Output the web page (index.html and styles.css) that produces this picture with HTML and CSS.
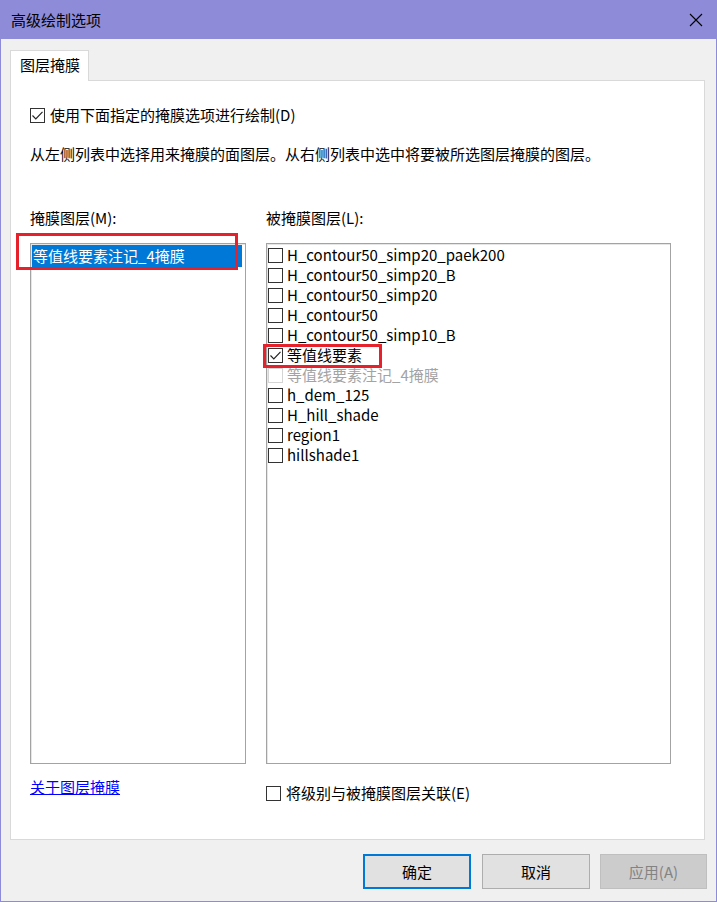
FILE: index.html
```html
<!DOCTYPE html>
<html lang="zh-CN">
<head>
<meta charset="utf-8">
<title>高级绘制选项</title>
<link rel="stylesheet" href="styles.css">
</head>
<body>
<div class="window">
  <div class="titlebar">
    <span class="title">高级绘制选项</span>
    <span class="close"><svg width="14" height="14" viewBox="0 0 14 14"><path d="M1 1L13 13M13 1L1 13" stroke="#000" stroke-width="1.1" fill="none"/></svg></span>
  </div>
  <div class="content">
    <div class="tabs"><div class="tab">图层掩膜</div></div>
    <div class="panel">
      <div class="check-row opt-d">
        <span class="cb"><svg width="13" height="13" viewBox="0 0 13 13"><path d="M1.5 6.5L4.8 9.8L11.5 2.8" stroke="#222" stroke-width="1.2" fill="none"/></svg></span>
        <span class="cb-label">使用下面指定的掩膜选项进行绘制(D)</span>
      </div>
      <p class="desc">从左侧列表中选择用来掩膜的面图层。从右侧列表中选中将要被所选图层掩膜的图层。</p>
      <div class="columns">
        <div class="col col-left">
          <div class="lbl">掩膜图层(M):</div>
          <div class="list">
            <div class="sel-item">等值线要素注记_4掩膜</div>
            <div class="mark mark-left"></div>
          </div>
          <a class="link" href="#">关于图层掩膜</a>
        </div>
        <div class="col col-right">
          <div class="lbl">被掩膜图层(L):</div>
          <div class="list list-checks">
            <div class="item"><span class="cb"></span><span>H_contour50_simp20_paek200</span></div>
            <div class="item"><span class="cb"></span><span>H_contour50_simp20_B</span></div>
            <div class="item"><span class="cb"></span><span>H_contour50_simp20</span></div>
            <div class="item"><span class="cb"></span><span>H_contour50</span></div>
            <div class="item"><span class="cb"></span><span>H_contour50_simp10_B</span></div>
            <div class="item"><span class="cb"><svg width="13" height="13" viewBox="0 0 13 13"><path d="M1.5 6.5L4.8 9.8L11.5 2.8" stroke="#222" stroke-width="1.2" fill="none"/></svg></span><span>等值线要素</span></div>
            <div class="item disabled"><span class="cb"></span><span>等值线要素注记_4掩膜</span></div>
            <div class="item"><span class="cb"></span><span>h_dem_125</span></div>
            <div class="item"><span class="cb"></span><span>H_hill_shade</span></div>
            <div class="item"><span class="cb"></span><span>region1</span></div>
            <div class="item"><span class="cb"></span><span>hillshade1</span></div>
            <div class="mark mark-right"></div>
          </div>
          <div class="check-row opt-e">
            <span class="cb"></span>
            <span class="cb-label">将级别与被掩膜图层关联(E)</span>
          </div>
        </div>
      </div>
    </div>
    <div class="buttons">
      <div class="btn btn-default">确定</div>
      <div class="btn btn-cancel">取消</div>
      <div class="btn btn-disabled">应用(A)</div>
    </div>
  </div>
</div>
</body>
</html>
```

FILE: styles.css
```css
html, body {
  margin: 0;
  padding: 0;
}
body {
  width: 717px;
  height: 902px;
  overflow: hidden;
  background: #f0f0f0;
  font-family: "Noto Sans CJK SC", "Noto Sans", sans-serif;
  font-size: 15px;
  color: #000;
}
.window {
  box-sizing: border-box;
  width: 717px;
  height: 902px;
  border: 1px solid #8e8bd9;
  border-top: none;
  background: #f0f0f0;
  display: flex;
  flex-direction: column;
}
.titlebar {
  height: 39px;
  background: #8e8bd9;
  display: flex;
  align-items: center;
  justify-content: space-between;
  padding: 0 13px 0 10px;
}
.title {
  line-height: 20px;
}
.close {
  display: flex;
  width: 14px;
  height: 14px;
}
.content {
  padding: 11px 9px 0 9px;
  display: flex;
  flex-direction: column;
}
.tabs {
  display: flex;
}
.tab {
  box-sizing: border-box;
  width: 79px;
  height: 31px;
  border: 1px solid #d9d9d9;
  border-bottom: none;
  background: #fff;
  margin-bottom: -1px;
  position: relative;
  z-index: 1;
  padding-left: 9px;
  line-height: 28px;
}
.panel {
  box-sizing: border-box;
  height: 760px;
  margin-right: 2px;
  border: 1px solid #d9d9d9;
  background: #fff;
  padding-left: 19px;
}
.check-row {
  display: flex;
  align-items: center;
  height: 20px;
  line-height: 20px;
}
.cb {
  box-sizing: border-box;
  width: 15px;
  height: 15px;
  border: 1px solid #333;
  background: #fff;
  display: flex;
  align-items: center;
  justify-content: center;
  flex: none;
}
.cb-label {
  margin-left: 5px;
}
.opt-d {
  margin-top: 24px;
}
.desc {
  margin: 19px 0 0;
  line-height: 20px;
}
.columns {
  margin-top: 44px;
  display: flex;
  gap: 20px;
}
.col {
  display: flex;
  flex-direction: column;
}
.col-left {
  width: 216px;
}
.col-right {
  width: 405px;
}
.lbl {
  line-height: 20px;
}
.list {
  box-sizing: border-box;
  position: relative;
  margin-top: 15px;
  height: 521px;
  border: 1px solid #a3a3a3;
  background: #fff;
  box-shadow: inset 1px 1px 0 #e6e6e6;
}
.sel-item {
  margin: 1px 3px 0 1px;
  height: 22px;
  line-height: 22px;
  padding-left: 1px;
  background: #0078d7;
  color: #fff;
}
.list-checks {
  padding: 1px;
}
.item {
  display: flex;
  align-items: center;
  height: 20px;
  line-height: 20px;
  gap: 4px;
}
.item.disabled {
  color: #a3a3a3;
}
.item.disabled .cb {
  border-color: #d4d4d4;
}
.mark {
  position: absolute;
  box-sizing: border-box;
  border: 3px solid #e5212b;
}
.mark-left {
  left: -15px;
  top: -11px;
  width: 222px;
  height: 37px;
}
.mark-right {
  left: -4px;
  top: 100px;
  width: 119px;
  height: 24px;
}
.link {
  margin-top: 13px;
  line-height: 20px;
  color: #0000ff;
  text-decoration: underline;
  align-self: flex-start;
}
.opt-e {
  margin-top: 19px;
}
.buttons {
  margin-top: 14px;
  display: flex;
  justify-content: flex-end;
}
.btn {
  box-sizing: border-box;
  width: 108px;
  height: 35px;
  display: flex;
  align-items: center;
  justify-content: center;
  background: #e1e1e1;
  border: 1px solid #adadad;
}
.btn-default {
  border: 2px solid #0078d7;
}
.btn-cancel {
  margin-left: 11px;
}
.btn-disabled {
  margin-left: 10px;
  width: 107px;
  background: #cccccc;
  border-color: #bfbfbf;
  color: #838383;
}
```
